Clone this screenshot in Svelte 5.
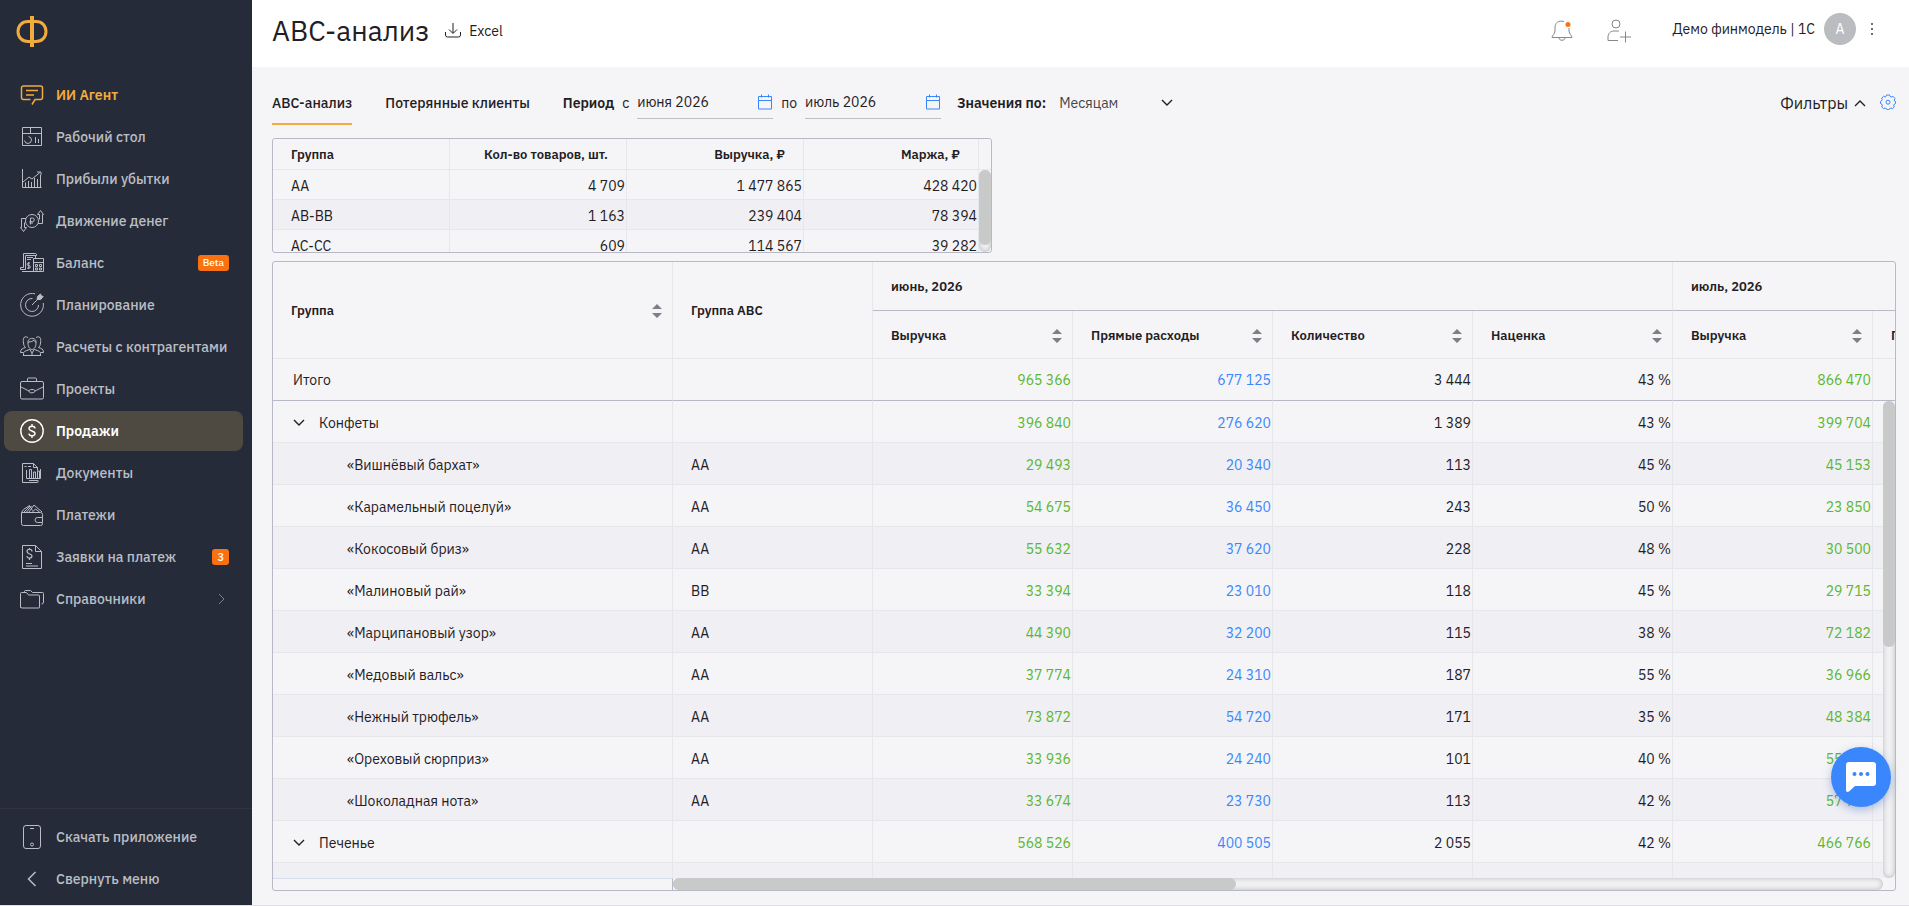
<script>
    const menu = [
        { icon: "agent", title: "ИИ Агент", accent: true },
        { icon: "desktop", title: "Рабочий стол" },
        { icon: "profit", title: "Прибыли убытки" },
        { icon: "cashflow", title: "Движение денег" },
        { icon: "balance", title: "Баланс", badge: "Beta" },
        { icon: "planning", title: "Планирование" },
        { icon: "people", title: "Расчеты с контрагентами" },
        { icon: "projects", title: "Проекты" },
        { icon: "sales", title: "Продажи", active: true },
        { icon: "docs", title: "Документы" },
        { icon: "wallet", title: "Платежи" },
        { icon: "request", title: "Заявки на платеж", badge: "3" },
        { icon: "folders", title: "Справочники", arrow: true },
    ];
    const bottomMenu = [
        { icon: "phone", title: "Скачать приложение" },
        { icon: "back", title: "Свернуть меню" },
    ];

    const summary = [
        ["AA", "4 709", "1 477 865", "428 420"],
        ["AB-BB", "1 163", "239 404", "78 394"],
        ["AC-CC", "609", "114 567", "39 282"],
    ];

    const columns = ["Выручка", "Прямые расходы", "Количество", "Наценка", "Выручка", "Прямые расходы"];
    const colors = ["green", "blue", "", "", "green", "blue"];
    const total = ["965 366", "677 125", "3 444", "43 %", "866 470", ""];
    const rows = [
        { name: "Конфеты", group: true, values: ["396 840", "276 620", "1 389", "43 %", "399 704", ""] },
        { name: "«Вишнёвый бархат»", abc: "AA", values: ["29 493", "20 340", "113", "45 %", "45 153", ""] },
        { name: "«Карамельный поцелуй»", abc: "AA", values: ["54 675", "36 450", "243", "50 %", "23 850", ""] },
        { name: "«Кокосовый бриз»", abc: "AA", values: ["55 632", "37 620", "228", "48 %", "30 500", ""] },
        { name: "«Малиновый рай»", abc: "BB", values: ["33 394", "23 010", "118", "45 %", "29 715", ""] },
        { name: "«Марципановый узор»", abc: "AA", values: ["44 390", "32 200", "115", "38 %", "72 182", ""] },
        { name: "«Медовый вальс»", abc: "AA", values: ["37 774", "24 310", "187", "55 %", "36 966", ""] },
        { name: "«Нежный трюфель»", abc: "AA", values: ["73 872", "54 720", "171", "35 %", "48 384", ""] },
        { name: "«Ореховый сюрприз»", abc: "AA", values: ["33 936", "24 240", "101", "40 %", "55 200", ""] },
        { name: "«Шоколадная нота»", abc: "AA", values: ["33 674", "23 730", "113", "42 %", "57 750", ""] },
        { name: "Печенье", group: true, values: ["568 526", "400 505", "2 055", "42 %", "466 766", ""] },
        { name: "", values: ["", "", "", "", "", ""] },
    ];

    let from = "июня 2026";
    let to = "июль 2026";
    let step = "Месяцам";
</script>

{#snippet menuIcon(name)}
    <svg class="menu-icon" viewBox="0 0 24 24" aria-hidden="true">
        {#if name === "agent"}
            <g stroke-width="1.5">
                <path d="M10.500 16.500H3.500a2 2 0 0 1-2-2V5a2 2 0 0 1 2-2h17a2 2 0 0 1 2 2v9.500a2 2 0 0 1-2 2h-5.500l-3 5" />
                <path d="M6 7.500h12M6 12h8" />
            </g>
        {:else if name === "desktop"}
            <path d="M2.500 2.500h19v18h-19zM2.500 8.500h19M10.500 2.500v6" />
            <path d="M8.500 11.500a3.500 3.500 0 1 1-4 4M15.500 12v6M18.500 14v4" />
        {:else if name === "profit"}
            <path d="M2.500 2v18.500h19M5.500 20v-4.500M8.500 20v-6M11.500 20v-5M14.500 20V11M17.500 20v-8M20.500 20V8" />
            <path d="M3 15l6-5 3 2 8-6.500M17 5h4v3" />
        {:else if name === "cashflow"}
            <circle cx="12" cy="12" r="6.500" />
            <path d="M10.500 15.500V9h2a1.800 1.800 0 0 1 0 3.600H9.500M9.500 14h3.500" />
            <path d="M6 9.500H1.500v9h-1l3 4 3-4h-2v-5M18 14.500h4.500v-9h1l-3-4-3 4h2v5" />
        {:else if name === "balance"}
            <path d="M3.500 2.500h12a1.500 1.500 0 0 1 1 2H5.500v14H.500v-2h3M3.500 2.500v14M7 6.500h6M7 8.500h4M15.500 5v2" />
            <path d="M13.500 7.500h10v13h-10zM13.500 11.500h10M2 20.500h12M15.500 13.500h2v2h-2zM19.500 13.500h2v2h-2zM15.500 17h2v2h-2zM19.500 17h2v2h-2z" />
            <path d="M10 12H8.500a1.300 1.300 0 0 0 0 2.600H9a1.300 1.300 0 0 1 0 2.600H7M8.700 11v7" />
        {:else if name === "planning"}
            <path d="M15 .800A11.400 11.400 0 1 0 23.300 10" />
            <path d="M12.500 5.500A6.500 6.500 0 1 0 18.500 12M12 12l6-6" />
            <path d="M17 6.500l.500-3 3-2.500.700 1.800 2 .700-2.500 3z" fill="currentColor" />
        {:else if name === "people"}
            <path d="M8 8c-1-6 9-6.500 8 0 0 4-2 6.500-4 6.500S8 12 8 8zM8 7c3 0 5-1 6-2 0 1 1 2 2 2M9.500 14l2.500 4 2.500-4" />
            <path d="M3.500 20.500v-2c0-2 2-2.500 6-4M20.500 20.500v-2c0-2-2-2.500-6-4M3 20.500h18M12 18v2" />
            <path d="M8 2.500C3 0 3 5 3.500 8c0 2 1 3.500 2 4.500-3 1-5 1.500-5 5h3M16 2.500c5-2.500 5 2.500 4.500 5.500 0 2-1 3.500-2 4.500 3 1 5 1.500 5 5h-3" />
        {:else if name === "projects"}
            <path d="M2 4.500h20A1.500 1.500 0 0 1 23.500 6v14.500A1.500 1.500 0 0 1 22 22H2a1.500 1.500 0 0 1-1.500-1.500V6A1.500 1.500 0 0 1 2 4.500z" />
            <path d="M7.500 4V2a1 1 0 0 1 1-1h7a1 1 0 0 1 1 1v2M1 10l8 4M23 10l-8 4M9 14c0-2 6-2 6 0s-6 3-6 0z" />
        {:else if name === "sales"}
            <g stroke-width="1.400">
                <circle cx="12" cy="12" r="11.200" />
                <path d="M15 9.500C15 6.500 9 6.500 9 9.500s6 2 6 5-6 3-6 0M12 5v2.500M12 16.500V19" />
            </g>
        {:else if name === "docs"}
            <path d="M17.500 21.500h-15v-19h11l4 4v3M13.500 2.500v4h4M4.500 5.500h2M8 5.500h3" />
            <path d="M6.500 9v8.500h14V8M9.500 17V8.500h2V17M13.500 17v-6h2v6M17.500 17V10h2v7M9 19.500h9v2" />
        {:else if name === "wallet"}
            <path d="M1.500 9.500h19a2 2 0 0 1 2 2v3h-5a2.500 2.500 0 0 0 0 5h5v1a2 2 0 0 1-2 2h-17a2 2 0 0 1-2-2zM22.500 14.500v5" />
            <path d="M1.500 9.500l2-3 6-4 3 5M4 9l6-6M6.500 9l5-6M9 9l5-7 8 7M12.500 9l3-3 4 3" />
        {:else if name === "request"}
            <path d="M2.500.500h13l6 6v17h-19zM15.500.500v6h6M6 18.500h6M6 21h12" />
            <path d="M12 6.500c0-3-5-3-5 0s5 2 5 4.500-5 3-5 0M9.500 3v2M9.500 13v2" stroke-width="1.200" />
        {:else if name === "folders"}
            <path d="M.500 20.500v-14a1 1 0 0 1 1-1h5l2 2.500h10a1 1 0 0 1 1 1v11.500a.500.500 0 0 1-.500.500h-17a1 1 0 0 1-1-1zM4.500 5V4.500a1 1 0 0 1 1-1h5l2 2h10a1 1 0 0 1 1 1V15a2 2 0 0 1-2 2" />
        {:else if name === "phone"}
            <rect x="3.500" y=".500" width="17" height="23" rx="2.500" />
            <path d="M10 3.500h4" />
            <circle cx="12" cy="19.500" r="1.500" />
        {:else}
            <path d="M15.500 5l-7 7 7 7" stroke-width="1.500" />
        {/if}
    </svg>
{/snippet}

{#snippet sortIcon()}
    <button class="sort" aria-label="Сортировать">
        <svg viewBox="0 0 10 14"><path d="M5 0l5 5H0zM5 14l5-5H0z" /></svg>
    </button>
{/snippet}

{#snippet calendar()}
    <svg class="calendar" viewBox="0 0 16 16" aria-hidden="true">
        <path d="M1.500 2.500h13v12.500h-13zM1.500 6.500h13M4.500.500v3M11.500.500v3" />
    </svg>
{/snippet}

<div class="app">
    <aside>
        <a class="logo" href="#home" aria-label="Главная">
            <svg viewBox="0 0 32 32">
                <path d="M12 5.500h8c6 0 10 4.200 10 10s-4 10-10 10h-8c-6 0-10-4.200-10-10s4-10 10-10z" />
                <path d="M16 0v31" stroke-width="4" />
            </svg>
        </a>
        <nav>
            {#each menu as item}
                <a class="item" class:accent={item.accent} class:active={item.active} href="#menu">
                    {@render menuIcon(item.icon)}
                    <span>{item.title}</span>
                    {#if item.badge}
                        <b class="badge" class:count={item.badge === "3"}>{item.badge}</b>
                    {/if}
                    {#if item.arrow}
                        <svg class="arrow" viewBox="0 0 8 12"><path d="M1 1l5 5-5 5" /></svg>
                    {/if}
                </a>
            {/each}
        </nav>
        <div class="bottom-menu">
            {#each bottomMenu as item}
                <button class="item">
                    {@render menuIcon(item.icon)}
                    <span>{item.title}</span>
                </button>
            {/each}
        </div>
    </aside>

    <div class="page">
        <header>
            <h1>АВС-анализ</h1>
            <button class="excel">
                <svg viewBox="0 0 18 18"><path d="M9 1v10M5 7.500l4 4 4-4M1.500 10v3a2 2 0 0 0 2 2h11a2 2 0 0 0 2-2v-3" /></svg>
                Excel
            </button>
            <div class="user">
                <button class="bell" aria-label="Уведомления">
                    <svg viewBox="0 0 24 24">
                        <path d="M14 2.500C8 1 5 4 5 9v3c0 3-3 4.500-3 6.500h20c0-2-3-3.500-3-6.500V9M9 19c0 3 6 3 6 0" />
                        <circle cx="18" cy="5.500" r="2.500" />
                    </svg>
                </button>
                <button class="invite" aria-label="Пригласить">
                    <svg viewBox="0 0 24 24">
                        <circle cx="9" cy="5" r="4" />
                        <path d="M12 12H7c-4 0-6 3-6 6v3.500h10M18.500 12.500v11M13 18h11" />
                    </svg>
                </button>
                <span>Демо финмодель | 1С</span>
                <span class="avatar">A</span>
                <button class="dots" aria-label="Меню"><i></i><i></i><i></i></button>
            </div>
        </header>

        <main>
            <div class="toolbar">
                <a class="tab selected" href="#abc">АВС-анализ</a>
                <a class="tab" href="#lost">Потерянные клиенты</a>
                <div class="period">
                    <b>Период</b>
                    <label for="from">с</label>
                    <div class="date">
                        <input id="from" type="text" bind:value={from} />
                        {@render calendar()}
                    </div>
                    <label for="to">по</label>
                    <div class="date">
                        <input id="to" type="text" bind:value={to} />
                        {@render calendar()}
                    </div>
                </div>
                <div class="step">
                    <label for="step">Значения по:</label>
                    <select id="step" bind:value={step}>
                        <option>Месяцам</option>
                    </select>
                    <svg class="chevron" viewBox="0 0 12 8"><path d="M1 1l5 5 5-5" /></svg>
                </div>
                <button class="filters">
                    Фильтры
                    <svg class="chevron" viewBox="0 0 12 8"><path d="M1 7l5-5 5 5" /></svg>
                </button>
                <button class="gear" aria-label="Настройки">
                    <svg viewBox="0 0 16 16">
                        <path d="M6.500 1h3l.500 1.500 1.500.500 1.500-.700L15 4.500l-.800 1.500.300 1 1 .500v2l-1.200.600-.600 1.400.600 1.500-1.800 1.700-1.500-.700-1.300.500-.700 1.200H7l-.700-1.200-1.300-.500-1.500.700L1.700 13l.600-1.500-.500-1.400L.500 9.500v-2l1.200-.700.500-1.300-.500-1.400L3.500 2.300 5 3l1-.500z" />
                        <circle cx="8" cy="8.200" r="2" />
                    </svg>
                </button>
            </div>

            <div class="frame summary">
                <table>
                    <thead>
                        <tr>
                            <th>Группа</th>
                            <th>Кол-во товаров, шт.</th>
                            <th>Выручка, ₽</th>
                            <th>Маржа, ₽</th>
                            <th class="stub"></th>
                        </tr>
                    </thead>
                    <tbody>
                        {#each summary as row}
                            <tr>
                                {#each row as cell}
                                    <td>{cell}</td>
                                {/each}
                                <td class="stub"></td>
                            </tr>
                        {/each}
                    </tbody>
                </table>
                <div class="track vertical"><div class="thumb"></div></div>
            </div>

            <div class="frame report">
                <div class="viewport">
                    <table>
                        <colgroup>
                            <col class="wide" />
                            <col />
                            {#each columns as column}
                                <col />
                            {/each}
                        </colgroup>
                        <thead>
                            <tr>
                                <th rowspan="2"><div>Группа {@render sortIcon()}</div></th>
                                <th rowspan="2">Группа АВС</th>
                                <th class="month" colspan="4">июнь, 2026</th>
                                <th class="month" colspan="2">июль, 2026</th>
                            </tr>
                            <tr>
                                {#each columns as column}
                                    <th><div>{column} {@render sortIcon()}</div></th>
                                {/each}
                            </tr>
                        </thead>
                        <tbody>
                            <tr class="total">
                                <td>Итого</td>
                                <td></td>
                                {#each total as value, i}
                                    <td class="number {colors[i]}">{value}</td>
                                {/each}
                            </tr>
                            {#each rows as row, i}
                                <tr class:striped={i % 2 === 1}>
                                    {#if row.group}
                                        <td>
                                            <button class="toggle">
                                                <svg class="chevron" viewBox="0 0 12 8"><path d="M1 1l5 5 5-5" /></svg>
                                                {row.name}
                                            </button>
                                        </td>
                                    {:else}
                                        <td class="child">{row.name}</td>
                                    {/if}
                                    <td>{row.abc || ""}</td>
                                    {#each row.values as value, i}
                                        <td class="number {colors[i]}">{value}</td>
                                    {/each}
                                </tr>
                            {/each}
                        </tbody>
                    </table>
                </div>
                <div class="scroll-row">
                    <div class="corner"></div>
                    <div class="track horizontal"><div class="thumb"></div></div>
                </div>
                <div class="track vertical"><div class="thumb"></div></div>
            </div>
        </main>
    </div>

    <button class="chat" aria-label="Чат">
        <svg viewBox="0 0 30 30">
            <path d="M3 0h24a3 3 0 0 1 3 3v18a3 3 0 0 1-3 3H9l-6 5.500c-1.500 1-3 .500-3-1.500V3a3 3 0 0 1 3-3z" />
            <g><circle cx="8.500" cy="12" r="2" /><circle cx="15" cy="12" r="2" /><circle cx="21.500" cy="12" r="2" /></g>
        </svg>
    </button>
</div>

<style>
    :global(body) {
        margin: 0;
        background: #f5f5f7;
    }

    .app {
        display: flex;
        height: 100vh;
        box-sizing: border-box;
        border-bottom: 1px solid #dfe1e6;
        font-family: "IBM Plex Sans", Inter, "Noto Sans", sans-serif;
        font-size: 14px;
        line-height: 20px;
        color: #1f2024;
        overflow: hidden;
    }

    button,
    input,
    select {
        font: inherit;
        color: inherit;
        background: none;
        border: none;
        padding: 0;
        margin: 0;
    }

    a {
        color: inherit;
        text-decoration: none;
    }

    svg {
        display: block;
        flex: none;
        fill: none;
        stroke: currentColor;
    }

    aside {
        flex: none;
        width: 252px;
        display: flex;
        flex-direction: column;
        background: #262b39;
        color: #b9bec4;
    }

    .logo {
        padding: 16px 16px 17px;
        height: 42px;
        color: #f2ab3c;
    }

    .logo svg {
        width: 32px;
        height: 32px;
        stroke-width: 3;
    }

    nav,
    .bottom-menu {
        display: grid;
        gap: 2px;
    }

    .item {
        display: flex;
        align-items: center;
        gap: 12px;
        box-sizing: border-box;
        width: 239px;
        height: 40px;
        margin: 0 4px;
        padding: 0 14px 0 16px;
        border-radius: 8px;
        font-weight: 500;
        white-space: nowrap;
    }

    .item.accent {
        color: #f2ab3c;
        font-weight: 600;
    }

    .item.active {
        background: #4e4a42;
        color: #fff;
        font-weight: 600;
    }

    .menu-icon {
        width: 24px;
        height: 24px;
    }

    .badge {
        margin-left: auto;
        padding: 0 5px;
        border-radius: 3px;
        background: #f97110;
        color: #fff;
        font-size: 10px;
        line-height: 16px;
        font-weight: 500;
    }

    .badge.count {
        font-size: 11px;
    }

    .arrow {
        width: 8px;
        height: 12px;
        margin: 0 3px 0 auto;
        color: #7c8089;
    }

    .bottom-menu {
        margin-top: auto;
        padding: 8px 0 6px;
        border-top: 1px solid #31343d;
    }

    .page {
        flex: 1;
        min-width: 0;
        display: flex;
        flex-direction: column;
        background: #f5f5f7;
    }

    header {
        flex: none;
        display: flex;
        align-items: center;
        height: 67px;
        box-sizing: border-box;
        padding: 0 32px 6px 20px;
        background: #fff;
    }

    h1 {
        margin: 0;
        font-size: 28px;
        line-height: 36px;
        font-weight: 400;
    }

    .excel {
        display: flex;
        align-items: center;
        gap: 7px;
        margin-left: 15px;
    }

    .excel svg {
        width: 18px;
        height: 18px;
    }

    .user {
        display: flex;
        align-items: center;
        margin-left: auto;
        padding-bottom: 4px;
    }

    .bell,
    .invite {
        padding-top: 4px;
        color: #85878e;
    }

    .bell svg,
    .invite svg {
        width: 24px;
        height: 24px;
    }

    .bell circle {
        fill: #f97110;
        stroke: none;
    }

    .invite {
        margin: 0 41px 0 33px;
    }

    .avatar {
        width: 32px;
        margin-left: 9px;
        border-radius: 50%;
        background: #bbbcc0;
        color: #fff;
        line-height: 32px;
        text-align: center;
    }

    .dots {
        display: grid;
        gap: 3px;
        padding: 4px;
        margin-left: 11px;
    }

    .dots i {
        width: 2px;
        height: 2px;
        background: #6b6d74;
    }

    main {
        flex: 1;
        min-height: 0;
        display: flex;
        flex-direction: column;
        padding: 0 13px 14px 20px;
    }

    .toolbar {
        flex: none;
        display: flex;
        align-items: center;
        height: 71px;
        white-space: nowrap;
    }

    .tab {
        padding: 12px 0 10px;
        border-bottom: 2px solid transparent;
        margin-right: 33px;
        font-weight: 500;
    }

    .tab.selected {
        border-color: #f2ab3c;
    }

    .period,
    .step {
        display: flex;
        align-items: center;
        gap: 8px;
    }

    .period b,
    .step label {
        font-weight: 600;
    }

    .date {
        display: flex;
        align-items: center;
        width: 136px;
        height: 32px;
        border-bottom: 1px solid #bdbfc3;
    }

    .date input {
        flex: 1;
        min-width: 0;
    }

    .calendar {
        width: 16px;
        height: 16px;
        color: #3a87fd;
    }

    .step {
        margin-left: 16px;
    }

    .step select {
        width: 127px;
        margin-right: -28px;
        padding-left: 5px;
        appearance: none;
        color: #45474d;
    }

    .chevron {
        width: 12px;
        height: 8px;
        stroke-width: 1.4;
    }

    .step .chevron {
        pointer-events: none;
    }

    .filters {
        display: flex;
        align-items: center;
        gap: 6px;
        margin-left: auto;
        font-size: 16px;
    }

    .gear {
        margin-left: 14px;
        padding-bottom: 2px;
        color: #3a87fd;
    }

    .gear svg {
        width: 16px;
        height: 16px;
    }

    .frame {
        position: relative;
        border: 1px solid #b7bac6;
        border-radius: 3px;
        box-sizing: border-box;
        overflow: hidden;
    }

    table {
        table-layout: fixed;
        border-collapse: separate;
        border-spacing: 0;
    }

    th,
    td {
        box-sizing: border-box;
        padding: 2px 18px 0;
        border-right: 1px solid #e6e7ea;
        border-bottom: 1px solid #e6e7ea;
        text-align: left;
        white-space: nowrap;
    }

    th {
        font-size: 13px;
        font-weight: 600;
    }

    .summary {
        flex: none;
        max-width: 720px;
        height: 115px;
        margin-bottom: 8px;
    }

    .summary table {
        width: 100%;
    }

    .summary th {
        width: 177px;
        height: 31px;
    }

    .summary th:nth-child(4) {
        width: auto;
    }

    .summary td {
        height: 30px;
    }

    .summary tr > :not(:first-child) {
        text-align: right;
    }

    .summary td:not(:first-child) {
        padding: 2px 1px 0;
    }

    .summary th.stub {
        width: 12px;
    }

    .summary .stub {
        padding: 0;
        border-right: none;
    }

    .summary tbody tr:nth-child(even),
    .striped {
        background: #f0eff4;
    }

    .track {
        border-radius: 6px;
        background: #f1f1f3;
        box-shadow: inset 0 0 5px #b4b6ba;
    }

    .thumb {
        border-radius: 6px;
        background: #c8caca;
    }

    .vertical {
        position: absolute;
        right: 0;
        width: 12px;
    }

    .summary .vertical {
        top: 31px;
        bottom: 0;
    }

    .summary .thumb {
        height: 91%;
    }

    .report {
        flex: 1;
        min-height: 0;
        display: flex;
        flex-direction: column;
    }

    .viewport {
        flex: 1;
        min-height: 0;
        overflow: hidden;
    }

    .report table {
        width: 1800px;
    }

    .report col {
        width: 200px;
    }

    .report .wide {
        width: 400px;
    }

    .report th {
        height: 48px;
        padding-right: 10px;
    }

    .report th.month {
        height: 49px;
        border-bottom-color: #b7bac6;
    }

    .report th div {
        display: flex;
        align-items: center;
        justify-content: space-between;
    }

    .sort svg {
        width: 10px;
        height: 14px;
        fill: #7d7e86;
        stroke: none;
    }

    .report td {
        height: 42px;
    }

    .report .child {
        padding-left: 74px;
    }

    .report .number {
        padding: 2px 1px 0;
        text-align: right;
    }

    .report .total td {
        padding-top: 0;
        border-bottom-color: #b7bac6;
    }

    .report .total td:first-child {
        padding-left: 20px;
    }

    .green {
        color: #5bb72d;
    }

    .blue {
        color: #3a87fd;
    }

    .toggle {
        display: flex;
        align-items: center;
        gap: 14px;
        padding-left: 2px;
    }

    .report .vertical {
        top: 139px;
        bottom: 12px;
    }

    .report .vertical .thumb {
        height: 246px;
    }

    .scroll-row {
        flex: none;
        display: flex;
        height: 12px;
        padding-right: 12px;
    }

    .corner {
        width: 399px;
        border-top: 1px solid #d8deec;
        border-right: 1px solid #b7bac6;
    }

    .horizontal {
        flex: 1;
    }

    .horizontal .thumb {
        width: 46.5%;
        height: 12px;
    }

    .chat {
        position: fixed;
        right: 18px;
        bottom: 99px;
        display: grid;
        place-items: center;
        width: 60px;
        height: 60px;
        border-radius: 50%;
        background: #3a87fd;
        color: #3a87fd;
        box-shadow: 0 3px 8px rgba(40, 90, 170, 0.35);
    }

    .chat svg {
        width: 30px;
        height: 30px;
        fill: #fff;
        stroke: none;
    }

    .chat g {
        fill: currentColor;
    }
</style>
